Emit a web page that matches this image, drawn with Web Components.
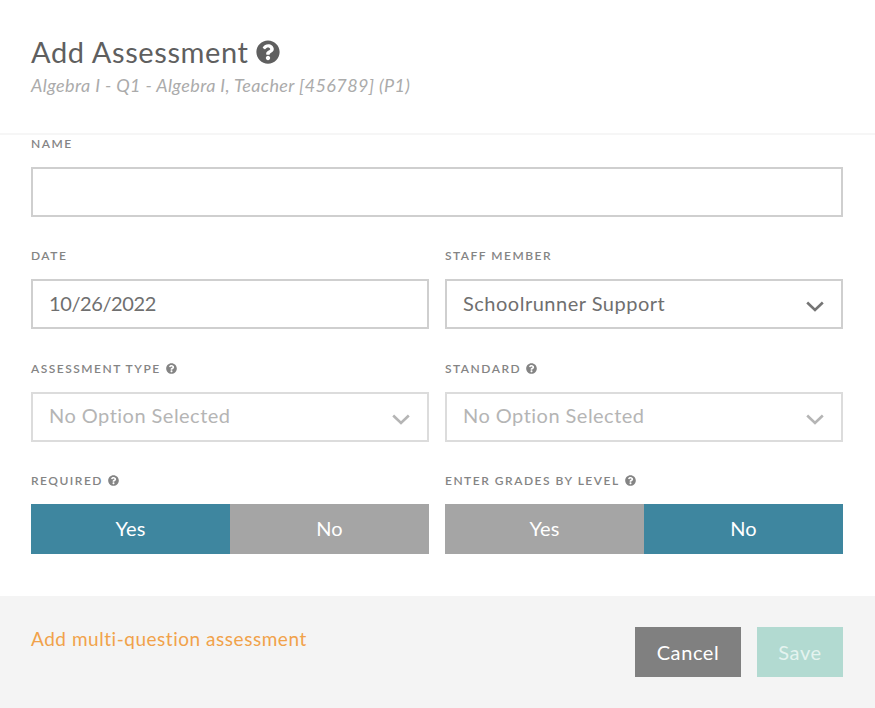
<!DOCTYPE html>
<html>
<head>
<meta charset="utf-8">
<title>Add Assessment</title>
<style>
html, body { margin: 0; padding: 0; background: #fff; }
body { font-family: Lato, "Open Sans", sans-serif; overflow: hidden; }
</style>
</head>
<body>
<add-assessment></add-assessment>

<script>
const QUESTION = 'M504 256c0 136.997-111.043 248-248 248S8 392.997 8 256C8 119.083 119.043 8 256 8s248 111.083 248 248zM262.655 90c-54.497 0-89.255 22.957-116.549 63.758-3.536 5.286-2.353 12.415 2.715 16.258l34.699 26.31c5.205 3.947 12.621 3.008 16.665-2.122 17.864-22.658 30.113-35.797 57.303-35.797 20.429 0 45.698 13.148 45.698 32.958 0 14.976-12.363 22.667-32.534 33.976C247.128 238.528 216 254.941 216 296v4c0 6.627 5.373 12 12 12h56c6.627 0 12-5.373 12-12v-1.333c0-28.462 83.186-29.647 83.186-106.667 0-58.002-60.165-102-116.531-102zM256 338c-25.365 0-46 20.635-46 46 0 25.364 20.635 46 46 46s46-20.636 46-46c0-25.365-20.635-46-46-46z';

class HelpIcon extends HTMLElement {
    constructor() {
        super();
        this.attachShadow({ mode: 'open' });
        const size = this.getAttribute('size') || 12;
        this.shadowRoot.innerHTML = `
<style>
:host { display: inline-flex; }
svg { display: block; fill: currentColor; }
</style>
<svg width="${size}" height="${size}" viewBox="0 0 512 512"><path d="${QUESTION}"/></svg>`;
    }
}
customElements.define('help-icon', HelpIcon);

class FormField extends HTMLElement {
    constructor() {
        super();
        this.attachShadow({ mode: 'open' });
        const help = this.hasAttribute('help') ? '<help-icon size="11"></help-icon>' : '';
        this.shadowRoot.innerHTML = `
<style>
:host { display: block; min-width: 0; }
.label {
    display: flex;
    align-items: center;
    gap: 5px;
    height: 16px;
    margin-bottom: 16px;
    font-size: 12px;
    font-weight: 600;
    letter-spacing: 1.5px;
    color: #848484;
    text-transform: uppercase;
}
</style>
<div class="label"><span>${this.getAttribute('label')}</span>${help}</div>
<slot></slot>`;
    }
}
customElements.define('form-field', FormField);

class TextBox extends HTMLElement {
    constructor() {
        super();
        this.attachShadow({ mode: 'open' });
        this.shadowRoot.innerHTML = `
<style>
:host {
    display: block;
    box-sizing: border-box;
    height: 50px;
    border: 2px solid #cfcfcf;
    background: #fff;
}
.box {
    box-sizing: border-box;
    display: flex;
    align-items: center;
    justify-content: space-between;
    height: 100%;
    padding: 0 16px 2px;
    font-size: 20px;
    letter-spacing: 0.5px;
    color: #6f6f6f;
}
:host([select]) .box { padding-right: 17px; }
:host([date]) .box { letter-spacing: -0.4px; }
:host([muted]) { border-color: #dcdcdc; }
:host([muted]) .box { color: #b5b5b5; letter-spacing: 0.47px; padding-bottom: 4px; }
svg { display: none; flex: none; margin-top: 7px; }
:host([muted]) svg { margin-top: 8px; }
:host([select]) svg { display: block; }
path { fill: none; stroke: #757575; stroke-width: 2.6; }
:host([muted]) path { stroke: #b5b5b5; }
</style>
<div class="box"><span><slot></slot></span>
<svg width="18" height="11" viewBox="0 0 18 11"><path d="M1.2 1.5 9 9l7.8-7.5"/></svg></div>`;
    }
}
customElements.define('text-box', TextBox);

class YesNo extends HTMLElement {
    constructor() {
        super();
        this.attachShadow({ mode: 'open' });
        const value = this.getAttribute('value');
        this.shadowRoot.innerHTML = `
<style>
:host { display: grid; grid-template-columns: 1fr 1fr; height: 50px; }
div {
    box-sizing: border-box;
    display: flex;
    align-items: center;
    justify-content: center;
    padding-bottom: 2px;
    background: #a5a5a5;
    color: #fff;
    font-size: 20px;
    letter-spacing: 0.2px;
}
.on { background: #3e869f; }
</style>
<div class="${value === 'yes' ? 'on' : ''}">Yes</div>
<div class="${value === 'no' ? 'on' : ''}">No</div>`;
    }
}
customElements.define('yes-no', YesNo);

class ActionButton extends HTMLElement {
    constructor() {
        super();
        this.attachShadow({ mode: 'open' });
        this.shadowRoot.innerHTML = `
<style>
:host {
    display: flex;
    align-items: center;
    justify-content: center;
    box-sizing: border-box;
    height: 50px;
    padding: 0 20px;
    background: #808080;
    color: #fff;
    font-size: 20px;
    letter-spacing: 0.6px;
}
:host([disabled]) { background: #b2dad1; color: #e4f3ef; }
</style>
<slot></slot>`;
    }
}
customElements.define('action-button', ActionButton);

class AddAssessment extends HTMLElement {
    constructor() {
        super();
        this.attachShadow({ mode: 'open' });
        this.shadowRoot.innerHTML = `
<style>
:host {
    display: flex;
    flex-direction: column;
    height: 708px;
    font-family: Lato, "Open Sans", sans-serif;
    background: #fff;
}
header {
    box-sizing: border-box;
    height: 135px;
    padding: 34px 31px 0;
    border-bottom: 2px solid #f6f6f6;
}
h1 {
    display: flex;
    align-items: center;
    gap: 7px;
    margin: 0;
    height: 35px;
    font-size: 29px;
    font-weight: 400;
    letter-spacing: 0.62px;
    color: #5f5f5f;
}
.sub {
    margin-top: 5px;
    font-size: 18px;
    font-style: italic;
    letter-spacing: 0.38px;
    color: #ababab;
}
main {
    flex: 1;
    display: grid;
    grid-template-columns: 398px 398px;
    grid-template-rows: 82px 83px 82px 82px;
    gap: 30px 16px;
    align-content: start;
    padding: 0 32px 0 31px;
}
.wide { grid-column: 1 / 3; width: 812px; }
footer {
    box-sizing: border-box;
    height: 112px;
    padding: 30px 32px 0 31px;
    display: flex;
    justify-content: space-between;
    background: #f4f4f4;
}
.link { font-size: 19px; letter-spacing: 0.53px; line-height: 26px; color: #f1a24a; }
.actions { display: flex; gap: 16px; margin-top: 1px; }
.cancel { width: 106px; }
.save { width: 86px; }
</style>
<header>
    <h1><span>Add Assessment</span><help-icon size="24"></help-icon></h1>
    <div class="sub">Algebra I - Q1 - Algebra I, Teacher [456789] (P1)</div>
</header>
<main>
    <form-field class="wide" label="Name"><text-box></text-box></form-field>
    <form-field label="Date"><text-box date>10/26/2022</text-box></form-field>
    <form-field label="Staff Member"><text-box select>Schoolrunner Support</text-box></form-field>
    <form-field label="Assessment Type" help><text-box select muted>No Option Selected</text-box></form-field>
    <form-field label="Standard" help><text-box select muted>No Option Selected</text-box></form-field>
    <form-field label="Required" help><yes-no value="yes"></yes-no></form-field>
    <form-field label="Enter Grades by Level" help><yes-no value="no"></yes-no></form-field>
</main>
<footer>
    <div class="link">Add multi-question assessment</div>
    <div class="actions">
        <action-button class="cancel">Cancel</action-button>
        <action-button class="save" disabled>Save</action-button>
    </div>
</footer>`;
    }
}
customElements.define('add-assessment', AddAssessment);
</script>
</body>
</html>
